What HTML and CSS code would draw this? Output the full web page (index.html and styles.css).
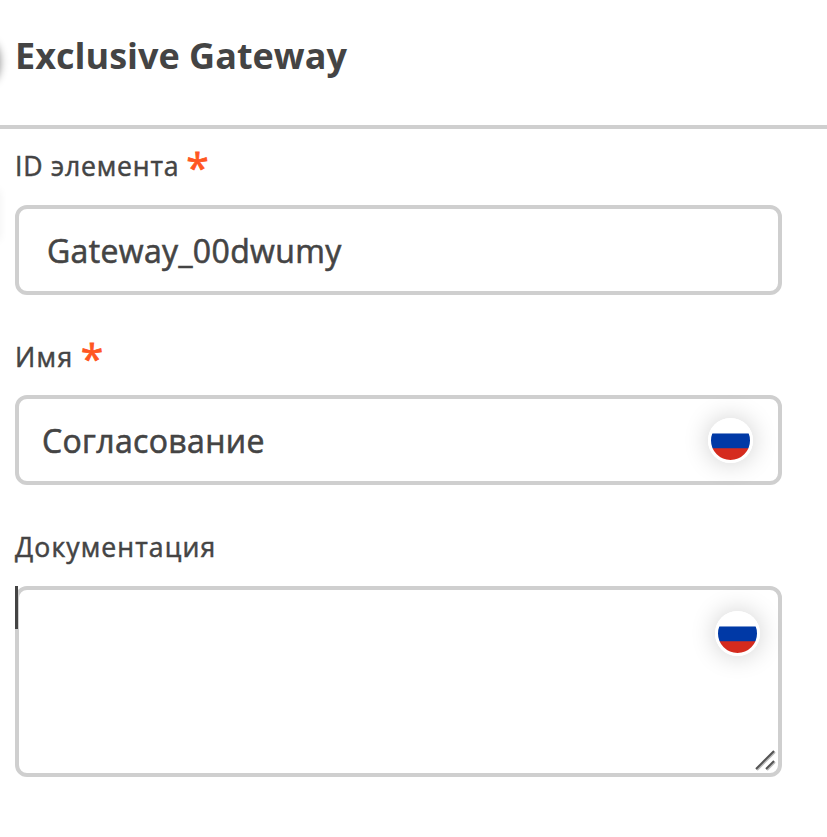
FILE: index.html
```html
<!DOCTYPE html>
<html lang="ru">
<head>
<meta charset="utf-8">
<title>Exclusive Gateway</title>
<link rel="stylesheet" href="styles.css">
</head>
<body>
<header class="header"><h1>Exclusive Gateway</h1></header>
<form class="form">
  <div class="field">
    <label class="label label-id">ID элемента <span class="star">*</span></label>
    <div class="input input-id">Gateway_00dwumy</div>
  </div>
  <div class="field">
    <label class="label label-name">Имя <span class="star">*</span></label>
    <div class="input input-name">Согласование<span class="flag"></span></div>
  </div>
  <div class="field">
    <label class="label label-doc">Документация</label>
    <div class="input area"><span class="caret"></span><span class="flag"></span>
      <svg class="grip" viewBox="0 0 22 22"><path class="grip-shade" d="M3 21L21 3M13 21L21 13"/><path d="M2 20L20 2M12 20L20 12"/></svg>
    </div>
  </div>
</form>
<span class="edge edge-top"></span>
<span class="edge edge-mid"></span>
</body>
</html>
```
FILE: styles.css
```css
* { box-sizing: border-box; }
body { margin: 0; height: 837px; overflow: hidden; position: relative; background: #fff; color: #444; font-family: "Open Sans", sans-serif; }
.header { height: 129px; padding: 31px 15px 0; border-bottom: 4px solid #cfcfcf; }
h1 { margin: 0; font-size: 36px; line-height: 50px; font-weight: 700; }
.form { padding: 17px 45px 0 15px; }
.field { height: 190px; }
.label { display: flex; height: 40px; align-items: center; gap: 7px; font-size: 26.6px; -webkit-text-stroke: .5px #444; }
.label-id { letter-spacing: .8px; }
.label-name { letter-spacing: 1.4px; padding-top: 2px; }
.label-doc { letter-spacing: 1.1px; padding-top: 2px; }
.star { align-self: flex-start; margin-top: 1px; font-size: 41px; line-height: 41px; letter-spacing: 0; color: #ff5722; -webkit-text-stroke: .8px #ff5722; }
.label-name .star { margin-top: 0; }
.input { position: relative; display: flex; align-items: center; height: 90px; margin-top: 19px; border: 4px solid #cfcfcf; border-radius: 12px; font-size: 32px; letter-spacing: .35px; -webkit-text-stroke: .6px #444; }
.input-id { padding-left: 28px; }
.input-name { padding-left: 23px; }
.area { height: 191px; margin-top: 20px; }
.flag { position: absolute; top: 19px; right: 25px; width: 45px; height: 45px; border: 3px solid #fff; border-radius: 50%; background: linear-gradient(#fff 0 31%, #0039a6 33% 69%, #d52b1e 71%); box-shadow: 0 0 26px rgba(0,0,0,.2); }
.area .flag { right: 18px; top: 21px; }
.caret { position: absolute; left: -4px; top: -4px; width: 3px; height: 43px; background: #444; }
.grip { position: absolute; right: 2px; bottom: 2px; width: 22px; height: 22px; fill: none; stroke: #555; stroke-width: 2; }
.grip-shade { stroke: #bbb; }
.edge { position: absolute; left: -20px; width: 20px; }
.edge-top { top: 42px; height: 40px; border-radius: 50%; box-shadow: 0 0 8px rgba(0,0,0,.45); }
.edge-mid { top: 190px; height: 50px; box-shadow: 0 0 8px rgba(0,0,0,.06); }
```
